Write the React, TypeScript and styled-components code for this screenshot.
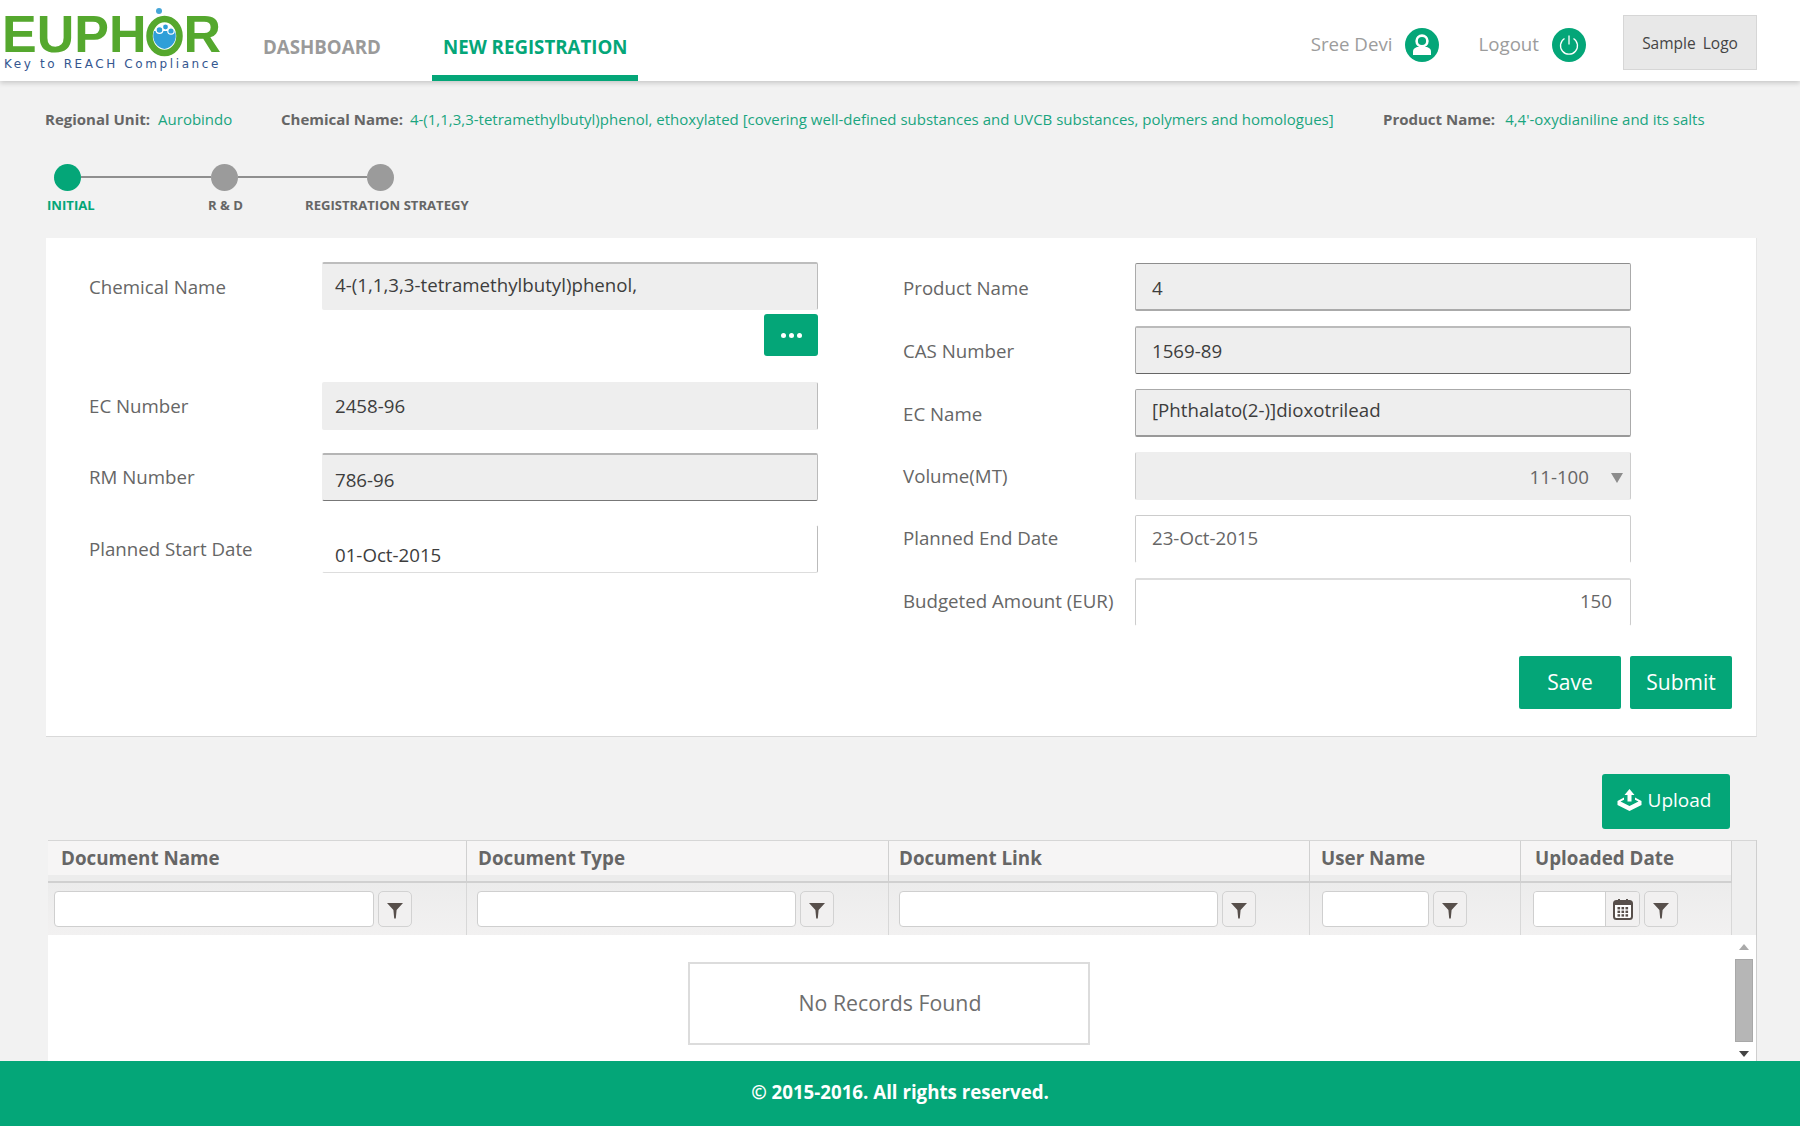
import React from "react";
import styled, { createGlobalStyle } from "styled-components";

const GREEN = "#04a678";

const Global = createGlobalStyle`
  html, body { margin: 0; padding: 0; background: #f2f2f2; }
  body { font-family: "Open Sans", "Liberation Sans", sans-serif; color: #555; }
  * { box-sizing: border-box; }
`;

const Page = styled.div`
  width: 1800px;
  height: 1126px;
  display: flex;
  flex-direction: column;
  overflow: hidden;
  background: #f2f2f2;
`;

const Header = styled.header`
  height: 81px;
  flex: none;
  background: #fff;
  box-shadow: 0 2px 5px rgba(0, 0, 0, 0.18);
  display: flex;
  align-items: flex-start;
  position: relative;
  z-index: 1;
`;

const Logo = styled.div`
  width: 230px;
  margin-left: 2px;
  padding-top: 10px;
  flex: none;
`;
const LogoMark = styled.div`
  display: flex;
  align-items: flex-end;
  height: 46px;
  font-family: "Liberation Sans", sans-serif;
  font-weight: 700;
  font-size: 52px;
  line-height: 44px;
  color: #55a82e;
`;
const LogoR = styled.span`
  display: inline-block;
`;
const Tagline = styled.div`
  font-family: "DejaVu Sans", sans-serif;
  font-size: 12px;
  line-height: 14px;
  letter-spacing: 2.6px;
  color: #34568f;
  white-space: nowrap;
  margin: 1px 0 0 2px;
`;

const Nav = styled.nav`
  display: flex;
  height: 81px;
  margin-left: 31px;
`;
const NavItem = styled.div<{ $active?: boolean }>`
  height: 81px;
  padding: 34px 10px 0 ${(p) => (p.$active ? "11px" : "0")};
  width: ${(p) => (p.$active ? "206px" : "169px")};
  font-size: 18.7px;
  line-height: 26px;
  font-weight: 700;
  color: ${(p) => (p.$active ? GREEN : "#9a9a9a")};
  border-bottom: 6px solid ${(p) => (p.$active ? GREEN : "transparent")};
  white-space: nowrap;
`;

const HeaderRight = styled.div`
  margin-left: auto;
  margin-right: 43px;
  display: flex;
  align-items: center;
  height: 81px;
`;
const HeaderText = styled.span`
  font-size: 18.7px;
  color: #9c9c9c;
  margin-right: 13px;
  position: relative;
  top: 3px;
`;
const RoundIcon = styled.span<{ $gap: number }>`
  width: 34px;
  height: 34px;
  border-radius: 50%;
  background: ${GREEN};
  display: flex;
  align-items: center;
  justify-content: center;
  margin-right: ${(p) => p.$gap}px;
  position: relative;
  top: 4px;
`;
const SampleLogo = styled.div`
  width: 134px;
  height: 55px;
  background: #e8e8e8;
  border: 1px solid #d6d6d6;
  display: flex;
  align-items: center;
  justify-content: center;
  font-size: 15.5px;
  color: #444;
  word-spacing: 3px;
  position: relative;
  top: 2px;
`;

const Main = styled.main`
  flex: 1;
  min-height: 0;
  overflow: hidden;
`;

const MetaRow = styled.div`
  display: grid;
  grid-template-columns: 236px 1102px auto;
  padding: 28px 0 0 45px;
  height: 76px;
  font-size: 15px;
  line-height: 20px;
`;
const MetaItem = styled.div`
  display: flex;
  white-space: nowrap;
`;
const MetaLabel = styled.span<{ $gap: number }>`
  font-weight: 700;
  color: #666;
  margin-right: ${(p) => p.$gap}px;
`;
const MetaValue = styled.span`
  color: #1aa57f;
`;

const StepDots = styled.div`
  display: flex;
  align-items: center;
  padding-left: 54px;
  height: 28px;
  margin-top: 6px;
`;
const StepDot = styled.span<{ $active?: boolean }>`
  width: 27px;
  height: 27px;
  border-radius: 50%;
  flex: none;
  background: ${(p) => (p.$active ? GREEN : "#9b9b9b")};
`;
const StepLine = styled.span`
  width: 129.5px;
  height: 2px;
  background: #8f8f8f;
  flex: none;
`;
const StepLabels = styled.div`
  display: grid;
  grid-template-columns: 161px 97px auto;
  padding-left: 47px;
  margin-top: 4px;
  height: 22px;
  font-size: 13.1px;
  line-height: 20px;
  font-weight: 700;
`;
const StepLabel = styled.span<{ $active?: boolean }>`
  color: ${(p) => (p.$active ? GREEN : "#666")};
  white-space: nowrap;
`;

const Card = styled.section`
  margin: 21px 43px 0 46px;
  height: 499px;
  background: #fff;
  border-bottom: 1px solid #d9d9d9;
  border-right: 1px solid #e6e6e6;
  padding: 24px 0 0 43px;
`;
const FormGrid = styled.div`
  display: grid;
  grid-template-columns: 729px 496px;
  column-gap: 85px;
  align-items: start;
  height: 363px;
`;
const Column = styled.div`
  display: flex;
  flex-direction: column;
`;
const RightColumn = styled(Column)`
  padding-top: 1px;
  gap: 15px;
`;
const FormRow = styled.div<{ $mt?: number }>`
  display: flex;
  align-items: center;
  margin-top: ${(p) => p.$mt ?? 0}px;
`;
const Label = styled.label<{ $w: number; $dy?: number }>`
  width: ${(p) => p.$w}px;
  flex: none;
  font-size: 18.7px;
  line-height: 24px;
  color: #666;
  white-space: nowrap;
  position: relative;
  top: ${(p) => p.$dy ?? 0}px;
`;
const Field = styled.div<{
  $w: number;
  $fill?: boolean;
  $top?: string;
  $bottom?: string;
  $side?: string;
  $leftSide?: string;
  $padX?: number;
  $padR?: number;
  $right?: boolean;
  $muted?: boolean;
}>`
  width: ${(p) => p.$w}px;
  height: 48px;
  flex: none;
  display: flex;
  align-items: center;
  justify-content: ${(p) => (p.$right ? "flex-end" : "flex-start")};
  background: ${(p) => (p.$fill ? "#eeeeee" : "#fff")};
  border-top: ${(p) => p.$top ?? "1px solid transparent"};
  border-bottom: ${(p) => p.$bottom ?? "1px solid transparent"};
  border-right: ${(p) => p.$side ?? "1px solid #bbb"};
  border-left: ${(p) => p.$leftSide ?? "1px solid transparent"};
  border-radius: 2px;
  padding: 0 ${(p) => p.$padR ?? 12}px 0 ${(p) => p.$padX ?? 12}px;
  font-size: 18.7px;
  color: ${(p) => (p.$muted ? "#666" : "#3d3d3d")};
`;
const FieldText = styled.span<{ $dy?: number }>`
  position: relative;
  top: ${(p) => p.$dy ?? 0}px;
  white-space: nowrap;
`;
const DotsRow = styled.div`
  display: flex;
  justify-content: flex-end;
  margin-top: 4px;
`;
const DotsButton = styled.button`
  width: 54px;
  height: 42px;
  background: ${GREEN};
  border: 0;
  border-radius: 3px;
  display: flex;
  gap: 3px;
  align-items: center;
  justify-content: center;
  padding: 0;
`;
const Dot = styled.span`
  width: 5px;
  height: 5px;
  border-radius: 50%;
  background: #fff;
`;
const Caret = styled.span`
  width: 0;
  height: 0;
  border-left: 6px solid transparent;
  border-right: 6px solid transparent;
  border-top: 10px solid #8c8c8c;
  margin-left: 22px;
  position: relative;
  top: 2px;
`;

const Actions = styled.div`
  display: flex;
  justify-content: flex-end;
  gap: 9px;
  padding-right: 24px;
  margin-top: 31px;
`;
const Button = styled.button<{ $w: number; $h: number }>`
  width: ${(p) => p.$w}px;
  height: ${(p) => p.$h}px;
  background: ${GREEN};
  color: #fff;
  border: 0;
  border-radius: 2px;
  font-family: inherit;
  font-size: 21px;
  display: flex;
  align-items: center;
  justify-content: center;
  gap: 6px;
  padding: 0 0 1px;
`;
const UploadButton = styled(Button)`
  font-size: 19px;
  border-radius: 3px;
  padding: 0 4px 3px 0;
`;

const UploadRow = styled.div`
  display: flex;
  justify-content: flex-end;
  padding-right: 70px;
  margin-top: 37px;
`;

const Table = styled.div`
  margin: 11px 43px 0 48px;
  background: #fff;
  height: 221px;
  border-right: 1px solid #cfcfcf;
`;
const Head = styled.div`
  display: grid;
  grid-template-columns: 419px 422px 421px 211px 211px 1fr;
  grid-template-rows: 42px 52px;
  background: linear-gradient(#f6f5f5, #eeeded);
  border-top: 1px solid #d6d6d6;
  border-bottom: 2px solid #cfcfcf;
  height: 94px;
`;
const HeadCell = styled.div<{ $pad: number }>`
  border-right: 1px solid #d0d0d0;
  border-bottom: 2px solid #d0d0d0;
  padding-left: ${(p) => p.$pad}px;
  font-size: 18.8px;
  line-height: 34px;
  font-weight: 700;
  color: #666;
  background: linear-gradient(#f6f5f5 85%, #ececec 85%);
  white-space: nowrap;
`;
const FilterCell = styled.div<{ $pad: number }>`
  border-right: 1px solid #d8d8d8;
  padding: 8px 0 0 ${(p) => p.$pad}px;
  display: flex;
  align-items: flex-start;
  gap: 4px;
  background: linear-gradient(#ececec, #f2f1f1);
`;
const ScrollHead = styled.div`
  grid-column: 6;
  grid-row: 1 / span 2;
  background: #efefef;
`;
const FilterInput = styled.div<{ $w: number }>`
  width: ${(p) => p.$w}px;
  height: 36px;
  flex: none;
  background: #fff;
  border: 1px solid #cfcfcf;
  border-radius: 4px;
`;
const FilterButton = styled.div`
  width: 34px;
  height: 36px;
  flex: none;
  background: #f1f0f0;
  border: 1px solid #d2d2d2;
  border-radius: 5px;
  display: flex;
  align-items: center;
  justify-content: center;
`;
const DateWrap = styled.div`
  display: flex;
  width: 107px;
  height: 36px;
  flex: none;
  border: 1px solid #cfcfcf;
  border-radius: 4px;
  overflow: hidden;
`;
const DateInput = styled.div`
  flex: 1;
  background: #fff;
  border-right: 1px solid #cfcfcf;
`;
const DateBtn = styled.div`
  width: 33px;
  background: #f1f0f0;
  display: flex;
  align-items: center;
  justify-content: center;
`;
const Body = styled.div`
  display: flex;
  height: 127px;
`;
const BodyMain = styled.div`
  flex: 1;
  padding: 28px 0 0 640px;
`;
const EmptyBox = styled.div`
  width: 402px;
  height: 83px;
  border: 2px solid #dcdcdc;
  display: flex;
  align-items: center;
  justify-content: center;
  font-size: 21.3px;
  color: #6e6e6e;
  padding: 0 0 3px 2px;
`;
const Scroll = styled.div`
  width: 24px;
  flex: none;
  display: flex;
  flex-direction: column;
  align-items: center;
  padding-top: 10px;
`;
const ArrowUp = styled.span`
  width: 0;
  height: 0;
  border-left: 5px solid transparent;
  border-right: 5px solid transparent;
  border-bottom: 6px solid #aaa;
`;
const ArrowDown = styled.span`
  width: 0;
  height: 0;
  border-left: 5px solid transparent;
  border-right: 5px solid transparent;
  border-top: 6px solid #444;
  margin-top: 9px;
`;
const Thumb = styled.span`
  width: 18px;
  height: 83px;
  background: #b6b6b6;
  border: 1px solid #a8a8a8;
  margin-top: 9px;
`;

const Footer = styled.footer`
  height: 65px;
  flex: none;
  background: ${GREEN};
  color: #fff;
  font-size: 18.7px;
  font-weight: 700;
  display: flex;
  align-items: center;
  justify-content: center;
  padding-bottom: 4px;
`;

const FilterIcon = () => (
  <svg width="18" height="17" viewBox="0 0 18 17" style={{ marginTop: 3 }}>
    <path d="M1 1h16l-6.4 7-.8 8.5H8.2L7.4 8z" fill="#574f4b" />
  </svg>
);

const LogoO = () => (
  <svg width="37" height="54" viewBox="0 0 37 54" style={{ margin: "0 0 -1px 0", flex: "none" }}>
    <circle cx="13" cy="8" r="3" fill="#45a5d8" />
    <ellipse cx="18.5" cy="33" rx="15" ry="17" fill="none" stroke="#55a82e" strokeWidth="6.5" />
    <path d="M8 28h21c3 9-3 17-10.500 18C11 45 5 37 8 28z" fill="#2f9fd8" />
    <circle cx="13.500" cy="27" r="3.400" fill="#2f9fd8" stroke="#fff" strokeWidth="1.200" />
    <circle cx="19.500" cy="24" r="3" fill="#2f9fd8" stroke="#fff" strokeWidth="1.200" />
    <circle cx="25" cy="28" r="3.200" fill="#2f9fd8" stroke="#fff" strokeWidth="1.200" />
  </svg>
);

const CalendarIcon = () => (
  <svg width="20" height="22" viewBox="0 0 20 22">
    <rect x="1" y="3" width="18" height="18" rx="2.5" fill="#fff" stroke="#574f4b" strokeWidth="2" />
    <rect x="1" y="3" width="18" height="4" fill="#574f4b" />
    <rect x="5" y="1" width="2" height="4" fill="#574f4b" />
    <rect x="13" y="1" width="2" height="4" fill="#574f4b" />
    {[0, 1, 2].map((r) =>
      [0, 1, 2].map((c) => <rect key={`${r}${c}`} x={4.5 + c * 4} y={9 + r * 3.6} width="2.6" height="2.4" fill="#574f4b" />)
    )}
  </svg>
);

const UploadIcon = () => (
  <svg width="25" height="22" viewBox="0 0 25 22">
    <path d="M12.5 0l5 6h-3v6.5h-4V6h-3z" fill="#fff" />
    <path d="M7 8.5v2.3L3.5 12.6l9 4.4 9-4.4-3.5-1.8V8.5L24.5 12v4l-12 6-12-6v-4z" fill="#fff" />
  </svg>
);

export default function App() {
  return (
    <Page>
      <Global />
      <Header>
        <Logo>
          <LogoMark>
            EUPH
            <LogoO />
            <LogoR>R</LogoR>
          </LogoMark>
          <Tagline>Key to REACH Compliance</Tagline>
        </Logo>
        <Nav>
          <NavItem>DASHBOARD</NavItem>
          <NavItem $active>NEW REGISTRATION</NavItem>
        </Nav>
        <HeaderRight>
          <HeaderText>Sree Devi</HeaderText>
          <RoundIcon $gap={39}>
            <svg width="20" height="22" viewBox="0 0 20 22">
              <circle cx="10" cy="7" r="5.4" fill="none" stroke="#fff" strokeWidth="2.6" />
              <path d="M1 21v-3.5C1 14.5 4 13 6 13h8c2 0 5 1.500 5 4.500V21z" fill="#fff" />
            </svg>
          </RoundIcon>
          <HeaderText>Logout</HeaderText>
          <RoundIcon $gap={37}>
            <svg width="22" height="22" viewBox="0 0 22 22" fill="none" stroke="#fff" strokeWidth="1.3">
              <path d="M6.500 4.500a8.500 8.500 0 1 0 9 0" />
              <path d="M11 1.500v9" />
            </svg>
          </RoundIcon>
          <SampleLogo>Sample Logo</SampleLogo>
        </HeaderRight>
      </Header>
      <Main>
        <MetaRow>
          <MetaItem>
            <MetaLabel $gap={8}>Regional Unit:</MetaLabel>
            <MetaValue>Aurobindo</MetaValue>
          </MetaItem>
          <MetaItem>
            <MetaLabel $gap={7}>Chemical Name:</MetaLabel>
            <MetaValue>4-(1,1,3,3-tetramethylbutyl)phenol, ethoxylated [covering well-defined substances and UVCB substances, polymers and homologues]</MetaValue>
          </MetaItem>
          <MetaItem>
            <MetaLabel $gap={10}>Product Name:</MetaLabel>
            <MetaValue>4,4'-oxydianiline and its salts</MetaValue>
          </MetaItem>
        </MetaRow>
        <StepDots>
          <StepDot $active />
          <StepLine />
          <StepDot />
          <StepLine />
          <StepDot />
        </StepDots>
        <StepLabels>
          <StepLabel $active>INITIAL</StepLabel>
          <StepLabel>R &amp; D</StepLabel>
          <StepLabel>REGISTRATION STRATEGY</StepLabel>
        </StepLabels>
        <Card>
          <FormGrid>
            <Column>
              <FormRow>
                <Label $w={233} $dy={1}>Chemical Name</Label>
                <Field $w={496} $fill $top="2px solid #bdbdbd">
                  <FieldText $dy={-2}>4-(1,1,3,3-tetramethylbutyl)phenol,</FieldText>
                </Field>
              </FormRow>
              <DotsRow>
                <DotsButton aria-label="more">
                  <Dot />
                  <Dot />
                  <Dot />
                </DotsButton>
              </DotsRow>
              <FormRow $mt={26}>
                <Label $w={233}>EC Number</Label>
                <Field $w={496} $fill>
                  <FieldText $dy={-1}>2458-96</FieldText>
                </Field>
              </FormRow>
              <FormRow $mt={23}>
                <Label $w={233}>RM Number</Label>
                <Field $w={496} $fill $top="2px solid #b5b5b5" $bottom="1px solid #777">
                  <FieldText $dy={2}>786-96</FieldText>
                </Field>
              </FormRow>
              <FormRow $mt={24}>
                <Label $w={233}>Planned Start Date</Label>
                <Field $w={496} $bottom="1px solid #ddd">
                  <FieldText $dy={5}>01-Oct-2015</FieldText>
                </Field>
              </FormRow>
            </Column>
            <RightColumn>
              <FormRow>
                <Label $w={232} $dy={1}>Product Name</Label>
                <Field $w={496} $fill $padX={16} $top="1px solid #8d8d8d" $bottom="2px solid #aaa" $side="1px solid #aaa" $leftSide="1px solid #aaa">
                  <FieldText $dy={1}>4</FieldText>
                </Field>
              </FormRow>
              <FormRow>
                <Label $w={232} $dy={1}>CAS Number</Label>
                <Field $w={496} $fill $padX={16} $top="2px solid #bbb" $bottom="1px solid #666" $side="1px solid #aaa" $leftSide="1px solid #aaa">
                  <FieldText>1569-89</FieldText>
                </Field>
              </FormRow>
              <FormRow>
                <Label $w={232} $dy={1}>EC Name</Label>
                <Field $w={496} $fill $padX={16} $top="1px solid #aaa" $bottom="2px solid #999" $side="1px solid #aaa" $leftSide="1px solid #aaa">
                  <FieldText $dy={-3}>[Phthalato(2-)]dioxotrilead</FieldText>
                </Field>
              </FormRow>
              <FormRow>
                <Label $w={232}>Volume(MT)</Label>
                <Field $w={496} $fill $right $muted $padR={7} $leftSide="1px solid #ccc" $side="1px solid #ccc">
                  <FieldText>11-100</FieldText>
                  <Caret />
                </Field>
              </FormRow>
              <FormRow>
                <Label $w={232} $dy={-1}>Planned End Date</Label>
                <Field $w={496} $muted $padX={16} $top="1px solid #ccc" $side="1px solid #ccc" $leftSide="1px solid #ccc">
                  <FieldText $dy={-2}>23-Oct-2015</FieldText>
                </Field>
              </FormRow>
              <FormRow>
                <Label $w={232} $dy={-1}>Budgeted Amount (EUR)</Label>
                <Field $w={496} $right $muted $padR={18} $top="2px solid #ddd" $side="1px solid #ccc" $leftSide="1px solid #ccc">
                  <FieldText $dy={-2}>150</FieldText>
                </Field>
              </FormRow>
            </RightColumn>
          </FormGrid>
          <Actions>
            <Button $w={102} $h={53}>Save</Button>
            <Button $w={102} $h={53}>Submit</Button>
          </Actions>
        </Card>
        <UploadRow>
          <UploadButton $w={128} $h={55}>
            <UploadIcon />
            Upload
          </UploadButton>
        </UploadRow>
        <Table>
          <Head>
            <HeadCell $pad={13}>Document Name</HeadCell>
            <HeadCell $pad={11}>Document Type</HeadCell>
            <HeadCell $pad={10}>Document Link</HeadCell>
            <HeadCell $pad={11}>User Name</HeadCell>
            <HeadCell $pad={14}>Uploaded Date</HeadCell>
            <ScrollHead />
            <FilterCell $pad={6}>
              <FilterInput $w={320} />
              <FilterButton><FilterIcon /></FilterButton>
            </FilterCell>
            <FilterCell $pad={10}>
              <FilterInput $w={319} />
              <FilterButton><FilterIcon /></FilterButton>
            </FilterCell>
            <FilterCell $pad={10}>
              <FilterInput $w={319} />
              <FilterButton><FilterIcon /></FilterButton>
            </FilterCell>
            <FilterCell $pad={12}>
              <FilterInput $w={107} />
              <FilterButton><FilterIcon /></FilterButton>
            </FilterCell>
            <FilterCell $pad={12}>
              <DateWrap>
                <DateInput />
                <DateBtn><CalendarIcon /></DateBtn>
              </DateWrap>
              <FilterButton><FilterIcon /></FilterButton>
            </FilterCell>
          </Head>
          <Body>
            <BodyMain>
              <EmptyBox>No Records Found</EmptyBox>
            </BodyMain>
            <Scroll>
              <ArrowUp />
              <Thumb />
              <ArrowDown />
            </Scroll>
          </Body>
        </Table>
      </Main>
      <Footer>© 2015-2016. All rights reserved.</Footer>
    </Page>
  );
}
